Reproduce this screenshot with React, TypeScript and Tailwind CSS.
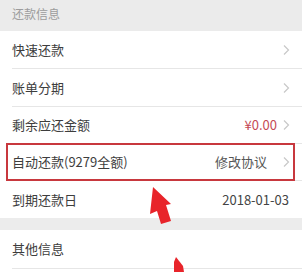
import React from 'react';

const font = { fontFamily: '"Noto Sans CJK SC", "Noto Sans", sans-serif' };

function Chevron() {
  return (
    <svg width="7" height="12" viewBox="0 0 7 12" className="ml-[6px] shrink-0">
      <path d="M1 1.5 L5.5 6 L1 10.5" fill="none" stroke="#c8c8c8" strokeWidth="1.2" />
    </svg>
  );
}

type RowProps = {
  label: string;
  right?: React.ReactNode;
  chevron?: boolean;
  h: string;
  divider?: boolean;
};

function Row({ label, right, chevron = true, h, divider = true }: RowProps) {
  return (
    <div className="bg-white pl-3">
      <div className={`flex items-center pr-3 ${h} ${divider ? 'border-b border-[#e6e6e6]' : ''}`}>
        <span className="flex-1 text-[13px] text-[#3d3d3d]">{label}</span>
        {right}
        {chevron && <Chevron />}
      </div>
    </div>
  );
}

export default function App() {
  return (
    <div className="relative w-[302px] h-[272px] overflow-hidden bg-white" style={font}>
      <div className="h-[31px] bg-[#ebebeb] pl-3 flex items-center">
        <span className="text-[12px] text-[#9c9c9c] -mt-[3px]">还款信息</span>
      </div>
      <Row label="快速还款" h="h-[38px]" />
      <Row label="账单分期" h="h-[38px]" />
      <Row
        label="剩余应还金额"
        h="h-[37px]"
        right={<span className="text-[13px] text-[#c54a55]">¥0.00</span>}
      />
      <Row
        label="自动还款(9279全额)"
        h="h-[37px]"
        right={<span className="text-[13px] text-[#555] mr-[10px]">修改协议</span>}
      />
      <Row
        label="到期还款日"
        h="h-[37px]"
        chevron={false}
        divider={false}
        right={<span className="text-[13px] text-[#444] mr-[1px]">2018-01-03</span>}
      />
      <div className="h-[12px] bg-[#ececec]" />
      <div className="bg-white pl-3">
        <div className="flex items-center h-[39px] border-b border-[#e6e6e6]">
          <span className="text-[13px] text-[#3d3d3d]">其他信息</span>
        </div>
      </div>

      {/* annotation: red box around auto repay row */}
      <div className="absolute left-[6px] top-[143px] w-[289px] h-[38px] border-2 border-[#c8383e]" />

      {/* annotation arrows */}
      <svg className="absolute left-0 top-0" width="302" height="272" viewBox="0 0 302 272">
        <polygon
          points="153,187 171,204 166,205 171,221 161,224 157,211 150,214"
          fill="#e8242a"
        />
        <polygon points="176,257 183,266 184,272 174,272 174,262" fill="#e8242a" />
      </svg>
    </div>
  );
}
